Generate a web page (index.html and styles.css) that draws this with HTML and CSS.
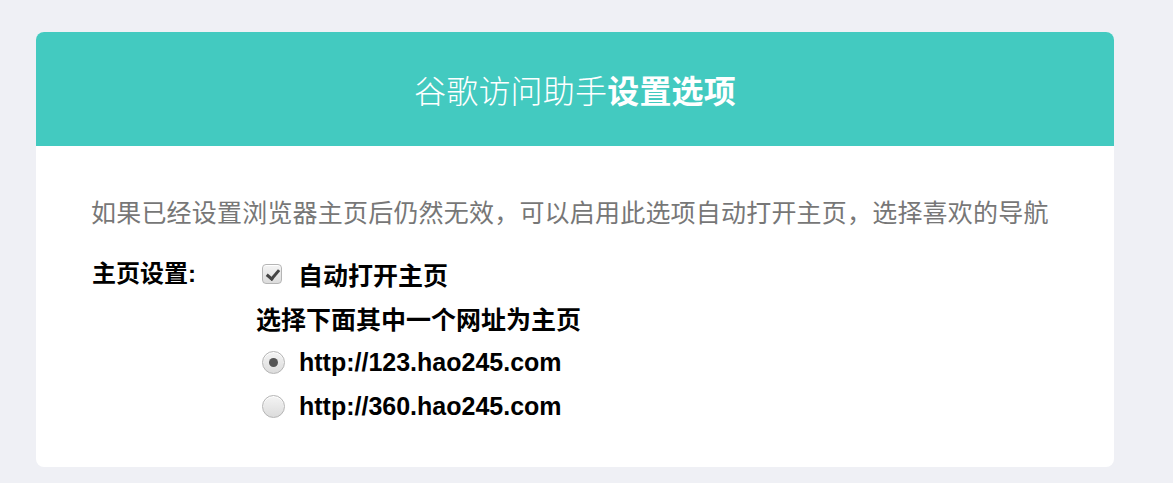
FILE: index.html
```html
<!DOCTYPE html>
<html lang="zh-CN">
<head>
    <meta charset="UTF-8">
    <meta name="viewport" content="width=device-width, initial-scale=1.0">
    <title>谷歌访问助手设置选项</title>
    <link rel="stylesheet" href="styles.css">
</head>
<body>
    <div class="card">
        <div class="card-header">
            <h1>谷歌访问助手<strong>设置选项</strong></h1>
        </div>
        <div class="card-body">
            <p class="tip">如果已经设置浏览器主页后仍然无效，可以启用此选项自动打开主页，选择喜欢的导航</p>
            <div class="setting">
                <div class="setting-label">主页设置:</div>
                <div class="setting-options">
                    <label class="option">
                        <input type="checkbox" class="check" checked>
                        <span>自动打开主页</span>
                    </label>
                    <div class="option-title">选择下面其中一个网址为主页</div>
                    <label class="option">
                        <input type="radio" name="home" class="radio" checked>
                        <span class="url">http://123.hao245.com</span>
                    </label>
                    <label class="option">
                        <input type="radio" name="home" class="radio">
                        <span class="url">http://360.hao245.com</span>
                    </label>
                </div>
            </div>
        </div>
    </div>
</body>
</html>
```

FILE: styles.css
```css
:root {
    --main-color: #43cac0;
    --page-bg: #eff0f5;
    --tip-color: #777;
    --text-color: #000;
}

body {
    margin: 0;
    padding: 32px 0 17px 36px;
    background: var(--page-bg);
    font-family: 'Liberation Sans', 'Noto Sans CJK SC', sans-serif;
    color: var(--text-color);
}

.card {
    width: 1078px;
    background: #fff;
    border-radius: 8px;
    overflow: hidden;
}

.card-header {
    height: 114px;
    background: var(--main-color);
    display: flex;
    align-items: center;
    justify-content: center;
}

.card-header h1 {
    margin: 0;
    font-size: 32px;
    font-weight: 300;
    letter-spacing: 0.2px;
    color: #fff;
    font-family: 'Noto Sans CJK SC', sans-serif;
}

.card-header strong {
    font-weight: 700;
}

.card-body {
    padding: 46px 55px 39px;
}

.tip {
    margin: 0 0 22px;
    font-size: 25px;
    line-height: 38px;
    letter-spacing: 0.2px;
    color: var(--tip-color);
    font-family: 'Noto Sans CJK SC', sans-serif;
}

.setting {
    display: flex;
}

.setting-label {
    width: 164px;
    flex-shrink: 0;
    font-size: 24px;
    font-weight: bold;
    line-height: 44px;
    padding-left: 1px;
}

.setting-options {
    display: flex;
    flex-direction: column;
}

.option,
.option-title {
    height: 44px;
    display: flex;
    align-items: center;
    font-size: 25px;
    font-weight: bold;
}

.option {
    padding-left: 6px;
}

.check,
.radio {
    -webkit-appearance: none;
    appearance: none;
    margin: 0 16px 0 0;
    flex-shrink: 0;
    border: 1px solid #b5b5b5;
    background: linear-gradient(#f4f4f4, #dcdcdc);
    box-shadow: inset 0 1px 0 #fff;
}

.check {
    width: 20px;
    height: 20px;
    border-radius: 4px;
    position: relative;
}

.check:checked::after {
    content: "";
    position: absolute;
    left: 6px;
    top: 2px;
    width: 5px;
    height: 10px;
    border: solid #444;
    border-width: 0 3px 3px 0;
    transform: rotate(40deg);
}

.radio {
    width: 23px;
    height: 23px;
    border-radius: 50%;
    margin-right: 14px;
    position: relative;
}

.radio:checked::after {
    content: "";
    position: absolute;
    left: 6px;
    top: 6px;
    width: 9px;
    height: 9px;
    border-radius: 50%;
    background: #555;
}
```
